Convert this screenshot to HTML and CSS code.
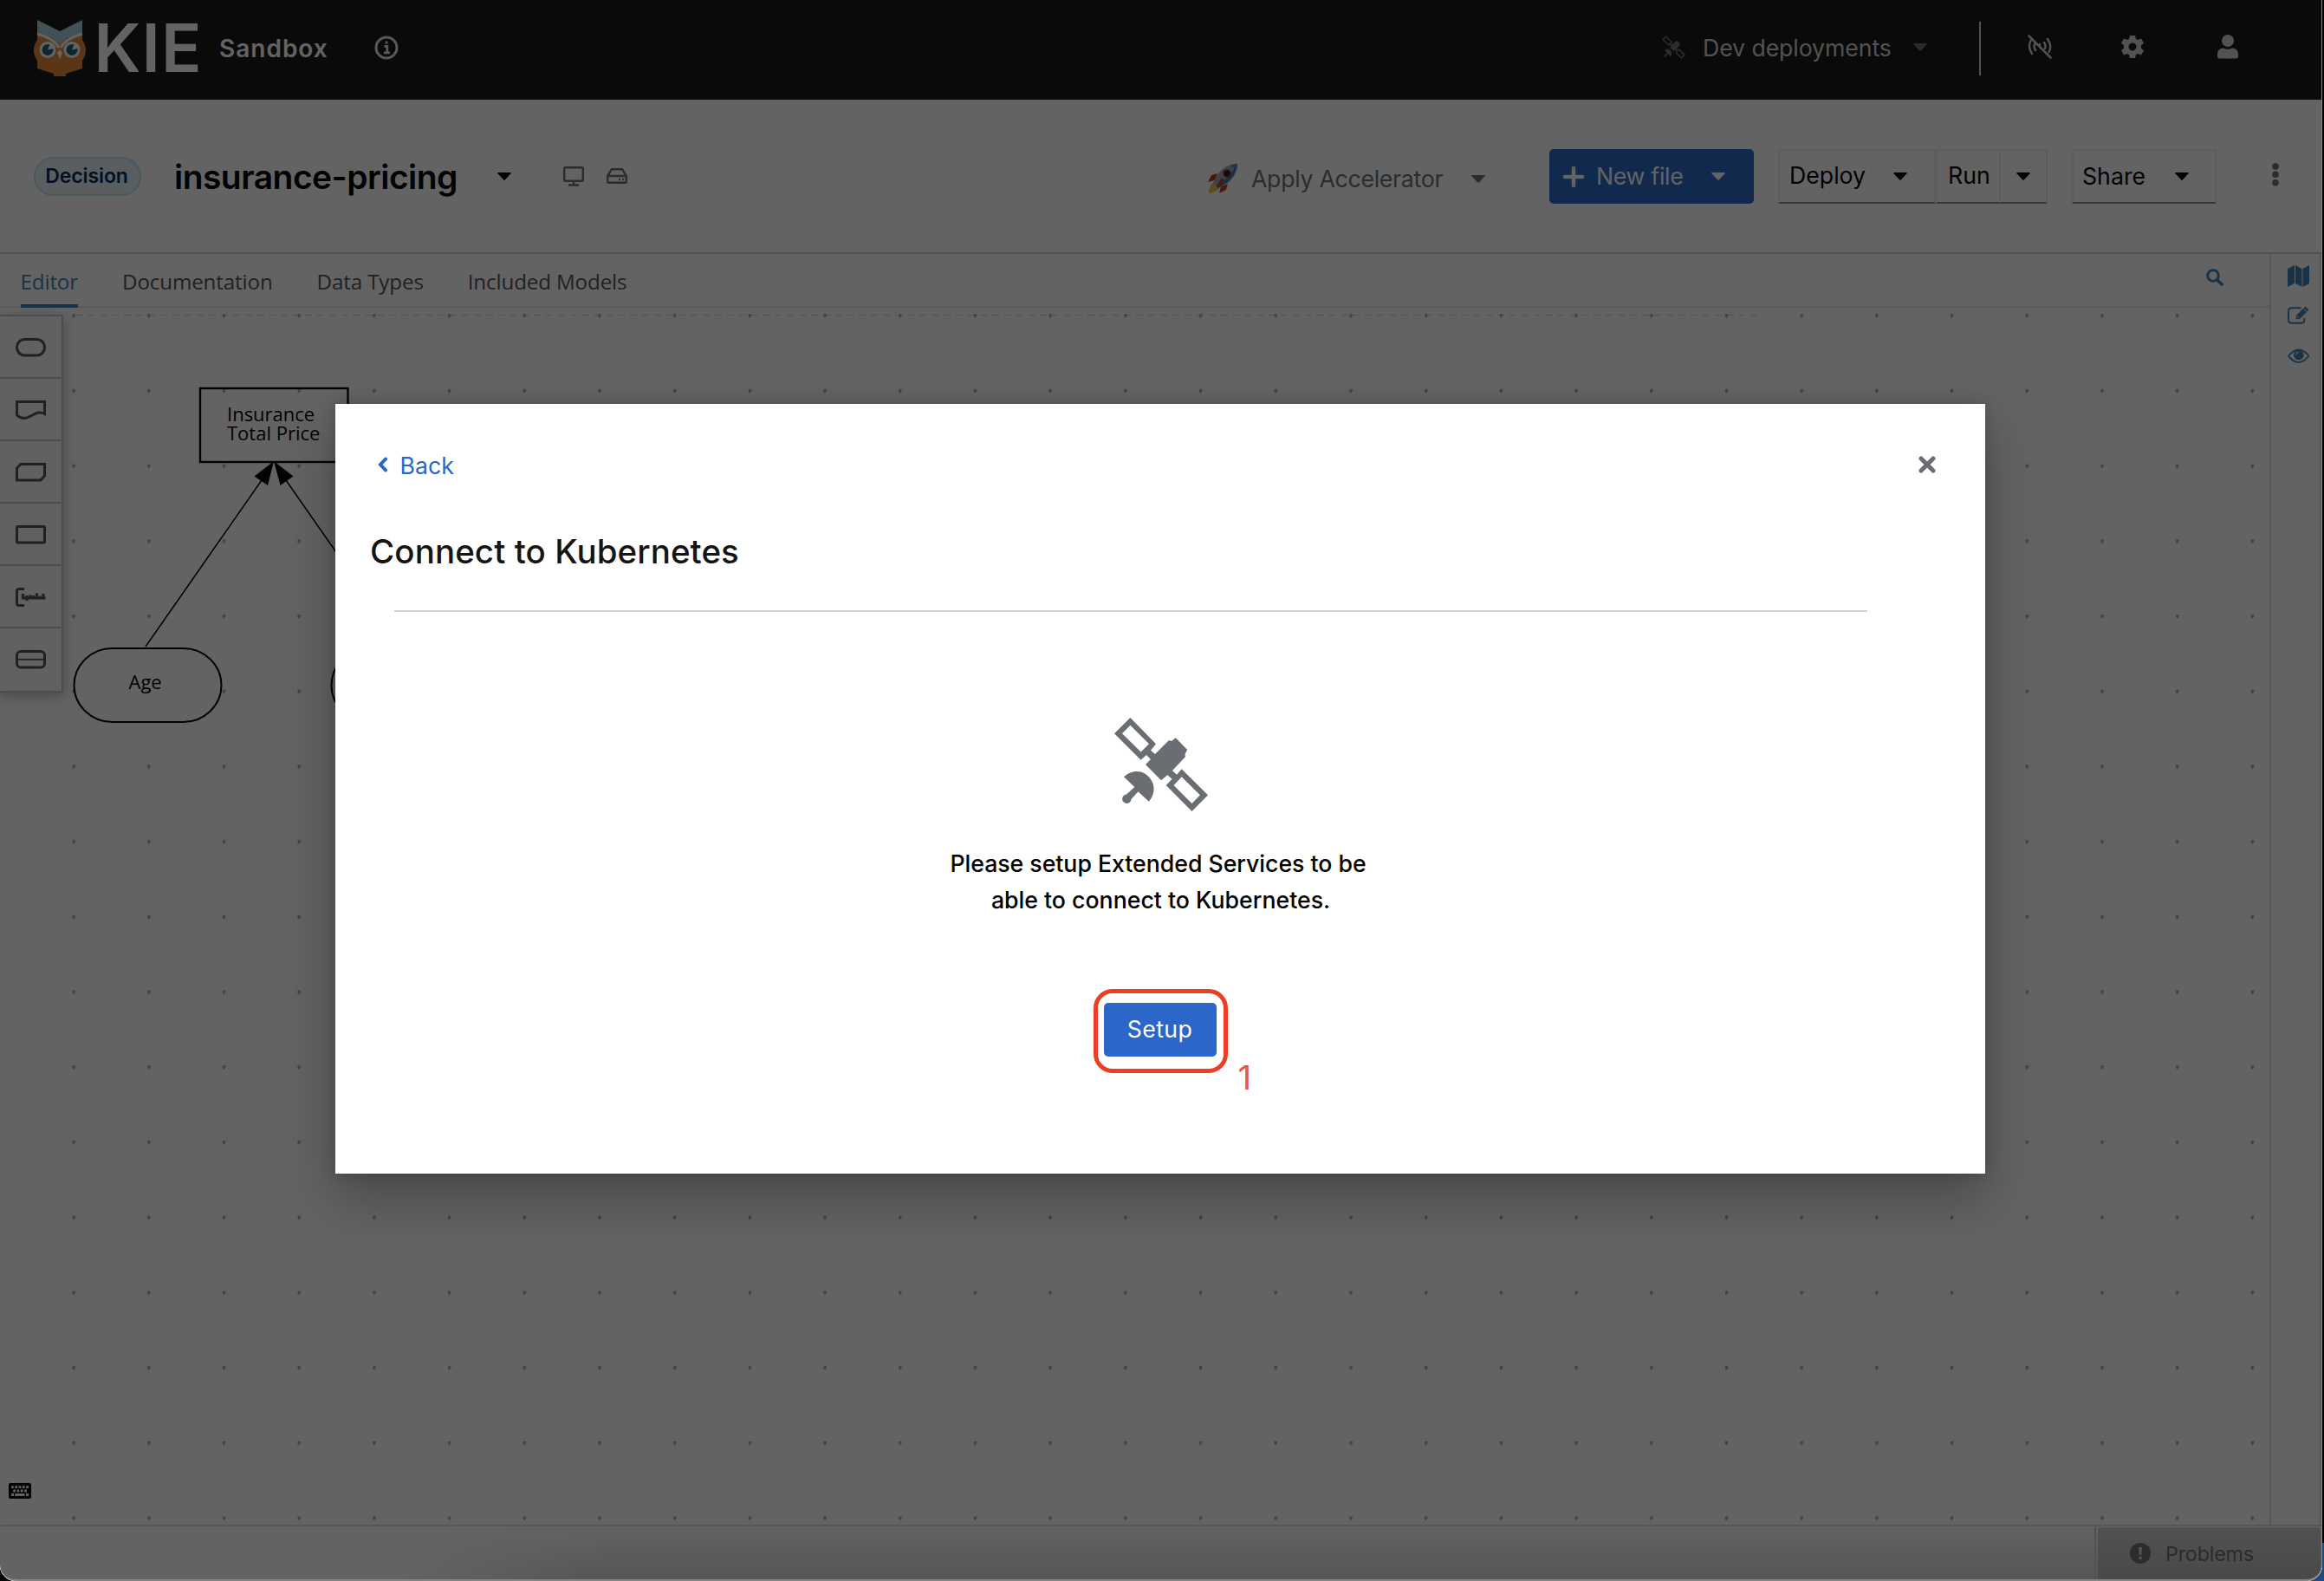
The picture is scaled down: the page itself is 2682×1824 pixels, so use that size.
FILE: index.html
```html
<!DOCTYPE html>
<html lang="en">
<head>
<meta charset="utf-8">
<title>KIE Sandbox</title>
<link rel="stylesheet" href="styles.css">
</head>
<body>
<svg width="0" height="0" class="defs" aria-hidden="true">
  <symbol id="satellite" viewBox="0 0 108 108">
    <path fill-rule="evenodd" d="M18.4 0L48 30.3L42 37.7L47 42L63 26L66 27L70.8 23.3L84.2 37L81.5 42L82 45L67 61L72 65.7L77.7 59.3L108 89.3L89.5 108L59.7 78L66.6 70.7L61.2 66.3L54 72.3L36 54L42 48L37 43L30.6 48.7L0 18.3ZM18.4 8.7L9 18.3L30.6 39.6L40 30.3ZM77.7 68.3L68.5 78L89.5 98.9L98.9 89.3Z"/>
    <path d="M11 68.3C18 61 30 59.500 38 66.500C47 74.500 48.500 87 39.800 96.700L27.500 85.300L19.500 94A5.200 5.200 0 1 1 14 88.500L23.300 80Z"/>
  </symbol>
  <symbol id="caret" viewBox="0 0 16 9"><path d="M1 0H15Q16.300 .2 15.500 1.300L8.800 8.500Q8 9.200 7.200 8.500L.5 1.300Q-.3 .2 1 0Z"/></symbol>
</svg>
<div class="window">
  <header class="masthead">
    <svg class="logo" width="204" height="80" viewBox="38 12 204 80">
      <path fill="#e78a35" d="M43 40L69 47L95 40V46Q103 58 95 70V79L76 85V88H62V85L43 79V70Q35 58 43 46Z"/>
      <path fill="#a5cfdd" d="M43 23L69 36L95 23V38Q75 43 69 51Q63 43 43 38Z"/>
      <path fill="none" stroke="#fff" stroke-width="3" d="M43 39Q62 44 68 55M95 39Q76 44 70 55"/>
      <circle cx="55" cy="57.500" r="9.500" fill="#fff"/><circle cx="83" cy="57.500" r="9.500" fill="#fff"/>
      <circle cx="55" cy="57.500" r="6.500" fill="#215e7c"/><circle cx="83" cy="57.500" r="6.500" fill="#215e7c"/>
      <path fill="#fff" d="M55 57.500L58 50L62 56ZM83 57.500L86 50L90 56ZM69 68L66 61L69 57L72 61Z"/>
      <text class="logo-text" x="108.500" y="83" textLength="124" lengthAdjust="spacing">KIE</text>
    </svg>
    <span class="brand">Sandbox</span>
    <svg class="info" width="28" height="28" viewBox="0 0 28 28" fill="none" stroke="#e0e0e0"><circle cx="14" cy="14" r="12" stroke-width="3"/><path d="M11.500 12.500H14.800V19M11 19.800H18M14 6.500V9.500" stroke-width="2.800"/></svg>
    <div class="dev">
      <svg width="27" height="27" fill="#6a6e73"><use href="#satellite"/></svg>
      <span class="dev-label">Dev deployments</span>
      <svg width="16" height="9" fill="#6a6e73"><use href="#caret"/></svg>
    </div>
    <span class="vline"></span>
    <svg class="h-icon" width="28" height="28" viewBox="0 0 28 28" fill="none" stroke="#d2d2d2" stroke-width="2.500" stroke-linecap="round"><path d="M1.500 1.500L26.500 26.500M4 6Q-.5 14 5 22M8.500 10Q6.500 14 9 18M23 5Q28.500 13 24.500 20M19 9Q21.500 12.500 20 16M14 11V14"/></svg>
    <svg class="h-icon gear" width="26" height="28" viewBox="0 0 26 28"><path fill="#d2d2d2" fill-rule="evenodd" d="M10 1H16L17 5L19 6L23 4.500L26 9.700L23 12.500V15.500L26 18.300L23 23.500L19 22L17 23L16 27H10L9 23L7 22L3 23.500L0 18.300L3 15.500V12.500L0 9.700L3 4.500L7 6L9 5ZM13 9.500A4.500 4.500 0 1 0 13 18.500A4.500 4.500 0 1 0 13 9.500Z"/></svg>
    <svg class="h-icon user" width="26" height="28" viewBox="0 0 26 28" fill="#d2d2d2"><circle cx="13" cy="7" r="7"/><path d="M1 23Q1 15.500 8 15.500Q13 18 18 15.500Q25 15.500 25 23V25Q25 27.500 22.500 27.500H3.500Q1 27.500 1 25Z"/></svg>
  </header>

  <section class="toolbar">
    <span class="badge">Decision</span>
    <h1 class="file-name">insurance-pricing</h1>
    <svg class="name-caret" width="16" height="9"><use href="#caret"/></svg>
    <svg class="desktop" width="24" height="23" viewBox="0 0 24 23" fill="none" stroke="#6a6e73" stroke-width="2.400"><rect x="1.200" y="1.200" width="21.600" height="15.600" rx="1.500"/><path d="M12 17V21M6 21.500H18"/></svg>
    <svg class="hdd" width="24" height="18" viewBox="0 0 24 18" fill="none" stroke="#6a6e73" stroke-width="2.400"><path d="M1.200 9L6 1.200H18L22.800 9V15.500Q22.800 16.800 21.500 16.800H2.500Q1.200 16.800 1.200 15.500ZM1.200 9H22.800M14 13H16M18 13H20"/></svg>
    <div class="accel">
      <svg width="36" height="36" viewBox="0 0 36 36">
        <path fill="#c33a1e" d="M12 12L5 14L1 22L9 20ZM24 24L22 31L14 35L16 27Z"/>
        <path fill="#e8c23d" d="M8 22Q2 26 2 35Q11 34 15 28Z"/>
        <path fill="#93a9bd" d="M35 1Q22 1 13 12L7 23L13 29L24 23Q35 14 35 1Z"/>
        <path fill="#3f72a8" d="M35 1Q34 13 24 22L13 29L11 27Q26 17 35 1Z"/>
        <path fill="#5b87b3" d="M35 1Q30 1 27 2.500L33.500 9Q35 6 35 1Z"/>
        <path fill="#c33a1e" d="M17 17L11 26L14 27L20 20Z"/>
        <circle cx="23" cy="12" r="4.800" fill="#a3281c"/><circle cx="23" cy="12" r="3" fill="#151c28"/>
      </svg>
      <span class="accel-label">Apply Accelerator</span>
      <svg width="16" height="9" fill="#6a6e73"><use href="#caret"/></svg>
    </div>
    <div class="btn primary">
      <svg width="24" height="24" viewBox="0 0 24 24"><path d="M12 2V22M2 12H22" stroke="#fff" stroke-width="4.500" stroke-linecap="round"/></svg>
      <span class="t-new">New file</span>
      <svg width="16" height="9" fill="#fff"><use href="#caret"/></svg>
    </div>
    <div class="btn deploy"><span class="t-deploy">Deploy</span><svg width="16" height="9"><use href="#caret"/></svg></div>
    <div class="btn run"><span class="t-run">Run</span></div>
    <div class="btn run-toggle"><svg width="16" height="9"><use href="#caret"/></svg></div>
    <div class="btn share"><span class="t-share">Share</span><svg width="16" height="9"><use href="#caret"/></svg></div>
    <svg class="kebab" width="8" height="27" fill="#6a6e73"><circle cx="4" cy="4" r="3.800"/><circle cx="4" cy="13.300" r="3.800"/><circle cx="4" cy="22.700" r="3.800"/></svg>
  </section>

  <main class="work">
    <div class="editor">
      <nav class="tabs">
        <span class="tab active">Editor</span><span class="tab">Documentation</span><span class="tab">Data Types</span><span class="tab">Included Models</span>
        <svg class="search" width="20" height="20" viewBox="0 0 20 20" fill="none" stroke="#3a7fb8" stroke-width="3"><circle cx="8" cy="8" r="6.300"/><path d="M12.500 12.500L18 18" stroke-width="3.600" stroke-linecap="round"/></svg>
      </nav>
      <div class="canvas">
        <svg class="diagram" width="2619" height="1404" viewBox="0 355 2619 1404">
          <defs><pattern id="grid" x="41.700" y="320.500" width="86.700" height="86.700" patternUnits="userSpaceOnUse"><path d="M41.500 42.500Q43 41 45.500 42.200Q45.500 45 43 46.500Q41.500 45 41.500 42.500Z" fill="#a9a9a9"/></pattern></defs>
          <path d="M88 363.500H2030" stroke="#dcdcdc" stroke-width="1.500" stroke-dasharray="8 5.900"/>
          <rect x="0" y="362" width="2619" height="1397" fill="url(#grid)"/>
          <g fill="none" stroke="#000">
            <rect x="231" y="448" width="170.500" height="85" stroke-width="2.400"/>
            <rect x="85.500" y="748" width="170" height="85" rx="44" stroke-width="2"/>
            <rect x="382.500" y="748" width="170.500" height="85" rx="44" stroke-width="2"/>
            <path d="M168 746L302 554M464 746L330 554" stroke-width="1.500"/>
          </g>
          <path d="M316 532L293.500 549.500L309 560ZM316 532L338.500 549.500L323.500 560Z"/>
          <g class="node-text"><text x="262" y="486">Insurance</text><text x="262" y="508">Total Price</text><text x="148.500" y="794.500">Age</text></g>
        </svg>
        <div class="palette">
          <span class="tool"><svg width="36" height="22"><rect x="1.500" y="1.500" width="32" height="18.500" rx="9"/></svg></span>
          <span class="tool"><svg width="36" height="22"><path d="M1.500 1.500H33.500V15.500C24 10 18 20.500 10 20.500Q5 20.500 1.500 17Z"/></svg></span>
          <span class="tool"><svg width="36" height="22"><path d="M6 1.500H33.500V15L29 20H1.500V6Z"/></svg></span>
          <span class="tool"><svg width="36" height="22"><rect x="1.500" y="1.500" width="32" height="18.500" rx="1"/></svg></span>
          <span class="tool"><svg width="36" height="22"><path d="M10 1.500H4Q1.500 1.500 1.500 4V18Q1.500 20.500 4 20.500H10"/><path stroke-width="3.200" d="M8.500 7V12H34.500M13 9V15M17 8.500V12.500M20.500 9V12.500M24.500 6.500V12.500M28.500 9.500V12.500M32 7V12.500"/></svg></span>
          <span class="tool"><svg width="36" height="22"><rect x="1.500" y="1.500" width="32" height="18.500" rx="4.500"/><path d="M2 10.800H33" stroke-width="1.800"/></svg></span>
        </div>
        <svg class="keyboard" width="26" height="18" viewBox="0 0 26 18"><rect width="26" height="18" rx="2"/><path stroke="#fff" stroke-width="2.800" d="M3 4.600H23" stroke-dasharray="2.800 1.500"/><path stroke="#fff" stroke-width="2.800" d="M5.200 9H21.500" stroke-dasharray="2.800 1.500"/><path stroke="#fff" stroke-width="2.800" d="M3 13.500H6M7.200 13.500H18.500M20 13.500H23"/></svg>
      </div>
    </div>
    <aside class="dock">
      <svg width="26" height="26" viewBox="0 0 26 26" fill="#3a7fb8"><path d="M0 4L8 0V21L0 25ZM9 0L16.500 4V25L9 21ZM17.500 4L25 0V21L17.500 25Z"/></svg>
      <svg width="26" height="22" viewBox="0 0 26 22" fill="none" stroke="#3a7fb8" stroke-width="2"><path d="M15.500 2.300H5Q1 2.300 1 6V16Q1 19.800 5 19.800H15.500Q19.300 19.800 19.300 16V14"/><path d="M10 15L10.800 10.500L20.500 1L24 4.500L14.300 14.200Z" fill="#3a7fb8" stroke-width="1" stroke-linejoin="round"/><path d="M18.300 2.800L22.300 6.800M11.500 12L13 13.500" stroke="#fff" stroke-width="1"/></svg>
      <svg width="26" height="18" viewBox="0 0 26 18" fill="none" stroke="#3a7fb8" stroke-width="1.800"><path d="M1 8.800Q12.800-6 24.500 8.800Q12.800 23 1 8.800Z"/><circle cx="12.800" cy="7.500" r="5.800" fill="#3a7fb8" stroke="none"/><path d="M9.700 7.500Q9.700 4.300 12.800 4.300" stroke="#fff" stroke-width="1.300"/></svg>
    </aside>
  </main>

  <footer class="status">
    <div class="problems"><div class="problems-tab">
      <svg width="24" height="24"><circle cx="12" cy="12" r="12" fill="#6a6e73"/><path d="M10 5H14L13.500 14H10.500Z" fill="#d2d2d2"/><circle cx="12" cy="17.500" r="2" fill="#d2d2d2"/></svg>
      <span class="t-problems">Problems</span>
    </div></div>
  </footer>

  <div class="backdrop">
    <div class="modal" role="dialog">
      <div class="modal-top">
        <svg width="11" height="18" viewBox="0 0 11 18"><path d="M9 2.500L3 9L9 15.500" fill="none" stroke="#2b66c9" stroke-width="4" stroke-linecap="round"/></svg>
        <a class="back">Back</a>
        <svg class="close" width="20" height="20"><path d="M3 3L17 17M17 3L3 17" stroke="#6a6e73" stroke-width="5" stroke-linecap="round"/></svg>
      </div>
      <h2 class="title">Connect to Kubernetes</h2>
      <div class="rule"></div>
      <div class="empty">
        <svg width="108" height="108" fill="#6a6e73"><use href="#satellite"/></svg>
        <p class="msg"><span class="l1">Please setup Extended Services to be</span><br><span class="l2">able to connect to Kubernetes.</span></p>
        <div class="setup">Setup<span class="ring"></span><span class="num">1</span></div>
      </div>
    </div>
  </div>
</div>
</body>
</html>
```
FILE: styles.css
```css
* { box-sizing: border-box; }
body { margin: 0; width: 2682px; height: 1824px; overflow: hidden; font-family: Inter, "Open Sans", sans-serif; color: #151515;
  background: linear-gradient(#000 1780px, #1f4a80 1780px) right / 40px 100% no-repeat, #000; }
svg { display: block; flex: none; }
.defs { position: absolute; }
span, a, h1, h2 { white-space: nowrap; }
.window { position: relative; width: 2680px; height: 1824px; display: flex; flex-direction: column; background: #fff; border-radius: 0 0 18px 18px; overflow: hidden; }

.masthead { height: 115px; background: #151515; display: flex; align-items: flex-start; padding-left: 38px; flex: none; }
.logo { margin-top: 12px; overflow: visible; }
.logo-text { font: 600 77px Inter, sans-serif; fill: #fff; }
.brand { margin: 39px 0 0 11px; width: 124px; font: 600 28px/34px Inter, sans-serif; letter-spacing: 1px; color: #fff; }
.info { margin: 41px 0 0 55px; }
.dev { display: flex; align-items: center; margin: 37px 0 0 1458px; height: 34px; }
.dev-label { width: 217px; margin: 1px 26px 0 20px; font-size: 26.700px; line-height: 34px; letter-spacing: -.1px; color: #d2d2d2; }
.vline { width: 2px; height: 62px; margin: 25px 0 0 60px; background: #d2d2d2; }
.h-icon { margin: 40px 0 0 54px; }
.gear { margin-left: 80px; }
.user { margin-left: 84px; }

.toolbar { height: 178px; border-bottom: 2px solid #d2d2d2; display: flex; align-items: flex-start; padding: 57px 0 0 39px; flex: none; }
.badge { width: 124px; height: 45px; margin-top: 9px; border: 2px solid #bee1f4; border-radius: 23px; background: #e7f1fa; color: #002952; font: 600 23px/40px Inter, sans-serif; letter-spacing: -.1px; text-align: center; padding-right: 2px; }
.file-name { margin: 7px 0 0 38px; width: 327px; font: 600 39px/50px Inter, sans-serif; letter-spacing: -.55px; color: #000; }
.name-caret { margin: 27px 0 0 46px; }
.desktop { margin: 20px 0 0 60px; }
.hdd { margin: 22px 0 0 26px; }
.accel { display: flex; align-items: center; height: 36px; margin: 16px 0 0 669px; color: #6a6e73; }
.accel-label { width: 221px; margin: 0 33px 1px 15px; font-size: 26.700px; letter-spacing: -.3px; }
.btn { height: 63px; display: flex; align-items: center; border: 2px solid #f0f0f0; border-bottom-color: #8a8d90; font-size: 26.700px; color: #000; }
.btn > * { flex: none; }
.primary { width: 236px; margin-left: 74px; padding-left: 16px; border: 0; border-radius: 5px; background: #2b66c9; color: #fff; }
.t-new { width: 98px; margin: 0 35px 1px 14px; letter-spacing: -.3px; }
.deploy { width: 182px; margin-left: 28px; padding-left: 11px; }
.t-deploy { width: 87px; margin: 0 33px 3px 0; }
.run { width: 75px; padding-left: 12px; }
.t-run { margin-bottom: 3px; }
.run-toggle { width: 54px; padding-left: 18px; border-left: 0; }
.share { width: 167px; margin-left: 28px; padding-left: 10px; }
.t-share { width: 71px; margin: 0 36px 1px 0; }
.kebab { margin: 16px 0 0 64px; }

.work { flex: 1; display: flex; min-height: 0; }
.editor { width: 2619px; display: flex; flex-direction: column; }
.tabs { height: 62px; border-bottom: 2px solid #e8e8e8; display: flex; padding-left: 23.500px; font: 24.200px/60px "Open Sans", sans-serif; letter-spacing: -.15px; color: #4d5258; gap: 51px; flex: none; }
.tab { height: 62px; padding-top: 2px; }
.active { color: #3a7fb8; border-bottom: 4px solid #3a7fb8; }
.search { margin: 17px 53px 0 auto; }
.canvas { position: relative; flex: 1; }
.diagram { position: absolute; left: 0; top: 0; }
.node-text { font: 22px "Open Sans", sans-serif; fill: #000; }
.palette { position: absolute; left: 0; top: 8px; width: 73px; border: 2px solid #c4c4c4; border-left: 0; background: #fafafa; box-shadow: 0 4px 14px rgba(0,0,0,.28); }
.tool { display: flex; height: 72px; padding: 25px 0 0 18px; border-bottom: 2px solid #c4c4c4; }
.tool:last-child { border-bottom: 0; }
.tool svg { fill: none; stroke: #4d5258; stroke-width: 3; }
.keyboard { position: absolute; left: 10px; bottom: 30px; }
.dock { width: 59px; border-left: 2px solid #dcdcdc; border-right: 1px solid #ccc; padding: 13px 0 0 19px; display: flex; flex-direction: column; gap: 21px; }
.dock svg:last-child { margin-top: 6px; }

.status { height: 65px; border-top: 2px solid #dcdcdc; display: flex; justify-content: flex-end; padding-right: 2px; flex: none; background: linear-gradient(90deg, #fff 460px, rgba(255,255,255,0) 700px), linear-gradient(#fff, #d9d9d9); }
.problems { width: 261px; border-left: 2px solid #cfcfcf; padding: 1px 0 2px 2px; }
.problems-tab { height: 60px; padding-left: 37px; display: flex; align-items: center; gap: 17px; border-radius: 4px; background: linear-gradient(#cfcfcf, #bcbcbc); }
.t-problems { font-size: 23.300px; line-height: 30px; margin-top: 2px; letter-spacing: -.2px; color: #6a6e73; }

.backdrop { position: absolute; inset: 0; display: flex; align-items: flex-start; padding: 466px 0 0 387px; background: rgba(3,3,3,.62); border: solid #858585; border-width: 0 1.500px 2px 0; border-radius: 0 0 18px 18px; }
.modal { width: 1904px; height: 888px; background: #fff; box-shadow: 0 28px 56px rgba(3,3,3,.27), 0 0 14px rgba(3,3,3,.18); padding: 60px 57px 0 41px; }
.modal-top { display: flex; height: 40px; align-items: flex-start; padding: 1px 0 0 8px; color: #2b66c9; }
.back { margin: -7px 0 0 14.500px; font-size: 26.700px; line-height: 34px; }
.close { margin-left: auto; margin-top: -1px; }
.title { margin: 44px 0 0 -1px; font: 500 38.500px/52px Inter, sans-serif; letter-spacing: .08px; }
.rule { width: 1700px; height: 2px; margin: 42px 0 0 27px; background: #d2d2d2; }
.empty { width: 1823px; margin: 122px 0 0 0; display: flex; flex-direction: column; align-items: center; }
.msg { margin: 39px 0 0; font-size: 26.700px; line-height: 42px; font-weight: 500; text-align: center; color: #000; }
.l1 { padding-right: 6px; letter-spacing: -.03px; }
.setup { position: relative; width: 130px; height: 62px; margin: 98px 2px 0 0; border-radius: 5px; background: #2b66c9; color: #fff; font-size: 26.700px; line-height: 60px; letter-spacing: .4px; text-align: center; }
.ring { position: absolute; left: -12px; top: -16px; width: 155px; height: 97px; border: 5px solid #ea3f24; border-radius: 22px; }
.num { position: absolute; left: 155px; top: 64px; font: 400 38.500px/44px Inter, sans-serif; color: #eb5545; }
```
